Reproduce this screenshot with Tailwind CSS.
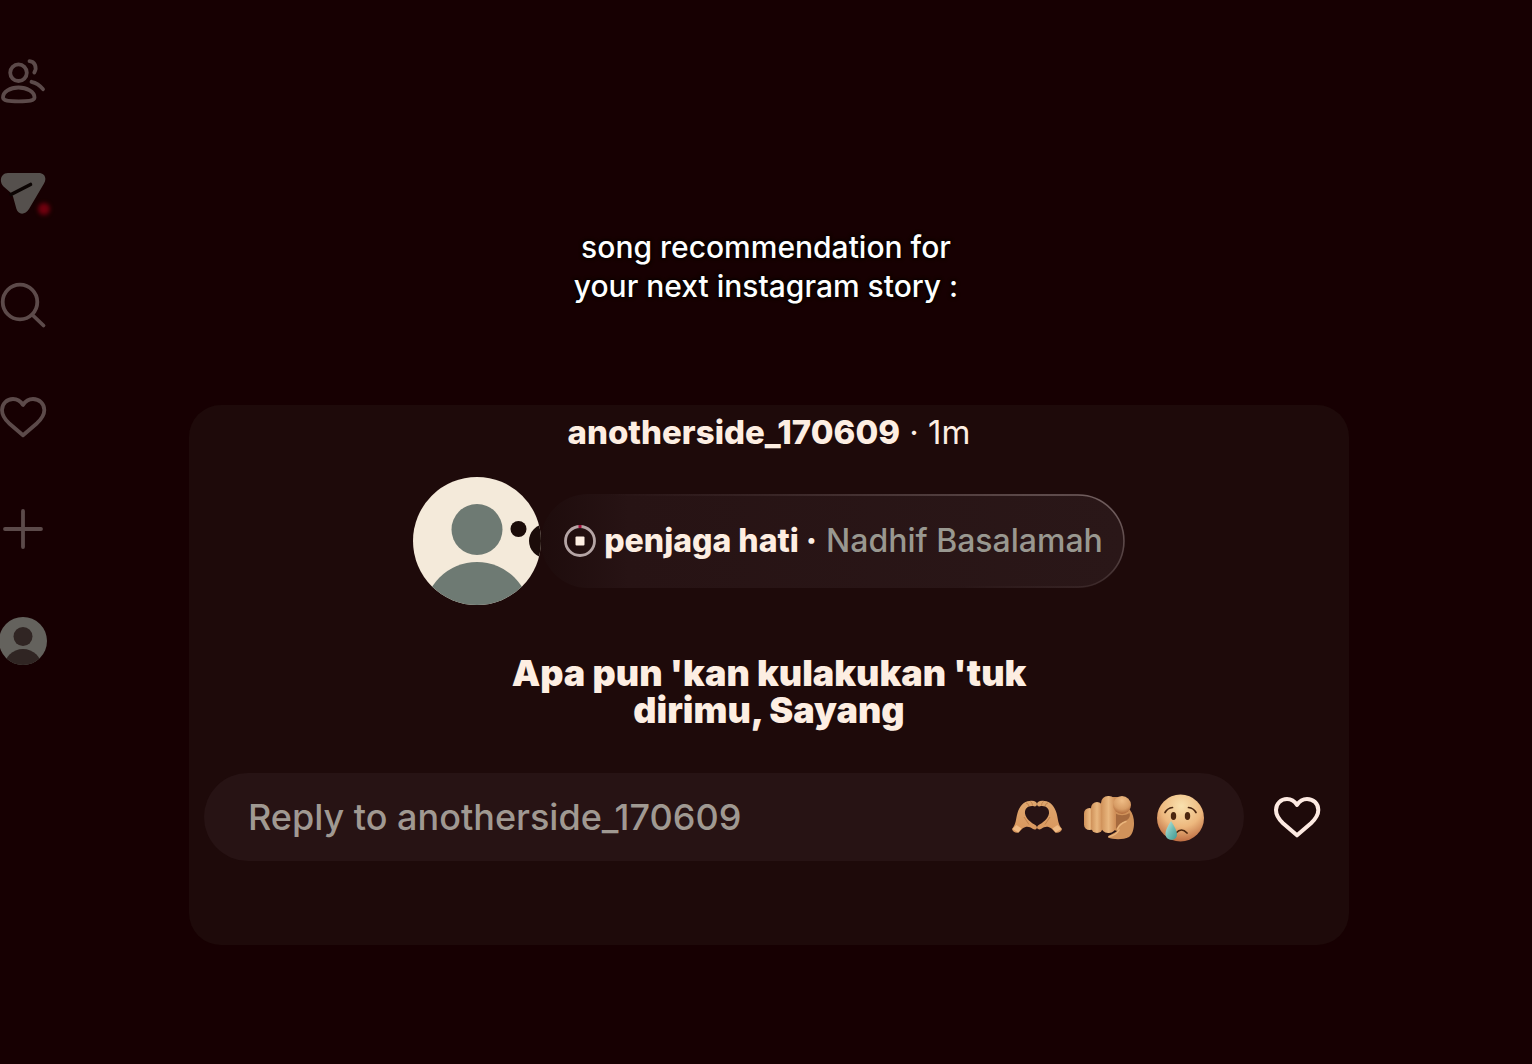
<!DOCTYPE html>
<html lang="en">
<head>
<meta charset="utf-8">
<meta name="viewport" content="width=device-width, initial-scale=1">
<title>Song recommendation</title>
<script src="https://cdn.jsdelivr.net/npm/@tailwindcss/browser@4"></script>
</head>
<body class="flex min-h-screen bg-[#170002] font-[Inter,sans-serif] text-[#fdeee2]">
  <nav class="flex w-12 shrink-0 flex-col gap-16 pt-[57px] text-[#5c4a4a]" aria-label="Main">
    <a href="#friends" aria-label="Friends" class="block size-12">
      <svg class="size-12" viewBox="0 0 48 48" fill="none" stroke="currentColor" stroke-width="3.8" stroke-linecap="round">
        <circle cx="18.5" cy="15.7" r="8.3"/>
        <path d="M3 40.500C3 35 10 30.500 18.500 30.500S34.500 35 34.500 40.500C34.500 43.500 29 44.300 18.700 44.300S3 43.500 3 40.500Z"/>
        <path d="M29.500 4.200C34.500 4.500 37.500 10 34.300 15.500M31.500 24.800C36.500 25.800 40.500 29 43 32.200"/>
      </svg>
    </a>
    <a href="#messages" aria-label="Messages" class="relative block size-12">
      <svg class="size-12" viewBox="0 0 48 48">
        <path fill="#55504d" d="M8 4H38.500C45 4 47 9.500 44 14.500L29 40C25 46.500 18 46 16.300 39.500L13 27.500L11 24L3.500 17.500C-1.500 12.500 1 4 8 4Z"/>
        <path d="M11 25.500L30.500 15.500" stroke="#0b0403" stroke-width="3.600" stroke-linecap="round"/>
      </svg>
      <span class="absolute top-[34px] left-[38px] size-3 rounded-full bg-[#70000e] blur-[2px]"></span>
    </a>
    <a href="#search" aria-label="Search" class="block size-12">
      <svg class="size-12" viewBox="0 0 48 48" fill="none" stroke="currentColor" stroke-width="3.8" stroke-linecap="round"><circle cx="20" cy="21" r="17.3"/><path d="M32.500 34L43.500 44.500"/></svg>
    </a>
    <a href="#activity" aria-label="Activity" class="block size-12">
      <svg class="size-12" viewBox="0 0 48 48" fill="none" stroke="currentColor" stroke-width="3.8" stroke-linejoin="round"><path d="M23 12C20.500 8 17 6 13 6C7 6 2 10.500 2 17C2 22.500 4.500 26 9 30.200L23 42.300L37 30.200C41.500 26 44.300 22.500 44.300 17C44.300 10.500 39.300 6 33 6C29 6 25.500 8 23 12Z"/></svg>
    </a>
    <a href="#create" aria-label="Create" class="block size-12">
      <svg class="size-12" viewBox="0 0 48 48" fill="none" stroke="currentColor" stroke-width="3.8" stroke-linecap="round"><path d="M23 6V42M5 24H41"/></svg>
    </a>
    <a href="#profile" aria-label="Profile" class="block size-12">
      <svg class="size-12" viewBox="0 0 48 48">
        <clipPath id="nav-avatar"><circle cx="23" cy="24" r="24"/></clipPath>
        <g clip-path="url(#nav-avatar)"><path fill="#64625d" d="M-1 0H48V48H-1Z"/><g fill="#302523"><circle cx="23" cy="19.500" r="9.500"/><circle cx="23" cy="51" r="19"/></g></g>
      </svg>
    </a>
  </nav>

  <main class="min-w-0 flex-1 pt-[228px] pr-[183px] pl-[141px]">
    <h1 class="pr-1.5 text-center text-[30px] leading-[39px] font-medium text-white [text-shadow:0_0_3px_#000,0_0_4px_#000]">song recommendation for<br>your next instagram story :</h1>

    <section class="mt-[99px] min-h-[540px] rounded-[32px] bg-[#1e0a0a] pt-2" aria-label="Note">
      <p class="text-center text-[33px] leading-[38px]"><strong class="font-extrabold">anotherside_170609</strong> · 1m</p>

      <div class="mt-[26px] flex items-center justify-center">
        <svg class="size-32 shrink-0" viewBox="0 0 128 128" role="img" aria-label="Profile picture">
          <clipPath id="avatar"><circle cx="64" cy="64" r="64"/></clipPath>
          <g clip-path="url(#avatar)">
            <path fill="#f4eada" d="M0 0H128V128H0Z"/>
            <g fill="#6e7a73"><circle cx="64" cy="52.500" r="25.500"/><circle cx="64" cy="138" r="53"/></g>
            <g fill="#1b0c09"><circle cx="105.500" cy="52" r="8"/><circle cx="133" cy="64" r="17"/></g>
          </g>
        </svg>
        <div class="relative flex h-[94px] items-center rounded-full bg-linear-to-r from-[#1e0c0c] via-[#271314] via-15% to-[#2a1718] pr-[22px] pl-[23px] text-[32px] leading-10 whitespace-nowrap">
          <svg class="pointer-events-none absolute inset-0 size-full" aria-hidden="true">
            <defs><linearGradient id="rim" x1="0" y1=".6" x2="1" y2="0"><stop offset=".35" stop-color="#6f5c5c" stop-opacity="0"/><stop offset=".55" stop-color="#6f5c5c" stop-opacity=".3"/><stop offset=".9" stop-color="#6f5c5c"/></linearGradient></defs>
            <rect x="1" y="1" width="99.700%" height="92" rx="46" fill="none" stroke="url(#rim)" stroke-width="1.500"/>
          </svg>
          <svg class="mr-2 size-8 shrink-0" viewBox="0 0 32 32" aria-hidden="true">
            <circle cx="16" cy="16" r="14.500" fill="none" stroke="#b5a5a5" stroke-width="2.800"/>
            <path d="M14.500 1.500H17.500" stroke="#a5103c" stroke-width="3"/>
            <rect x="11.500" y="11.500" width="9" height="9" rx="1" fill="#fdeee2"/>
          </svg>
          <p><strong class="font-extrabold">penjaga hati ·</strong> <span class="font-medium text-[#999890]">Nadhif Basalamah</span></p>
        </div>
      </div>

      <p class="mt-[50px] text-center text-[36px] leading-[37px] font-black">Apa pun 'kan kulakukan 'tuk<br>dirimu, Sayang</p>

      <form class="mt-11 flex items-center pr-7 pl-[15px]">
        <div class="flex h-[88px] min-w-0 flex-1 items-center rounded-full bg-[#271314] pr-[37px] pl-11">
          <input type="text" aria-label="Reply to anotherside_170609" placeholder="Reply to anotherside_170609" class="min-w-0 flex-1 bg-transparent text-[36px] leading-[44px] font-medium outline-none placeholder:text-[#a09992]">
          <div class="flex gap-5">
            <button type="button" aria-label="Heart hands" class="size-[52px]">
              <svg class="size-[52px]" viewBox="0 0 52 52">
                <defs><linearGradient id="hand" x1="0" y1="0" x2="0" y2="1"><stop stop-color="#dfa76e"/><stop offset="1" stop-color="#d8965d"/></linearGradient></defs>
                <g id="heart-hand" fill="url(#hand)">
                  <path d="M1 38C5 34 5 27 6.500 22C8.500 15 13 10 18.500 10C22.500 9 26 10.500 26 13C25.800 15.500 24 16 22 15C16.500 14.500 13.500 18 14 22.500C15 28 20 31.500 25 34.500C27.500 37 24.500 39.500 22 38C18 35 15 35 11.500 37.500L7.500 41.500C5 42.500 1.500 40.500 1 38Z"/>
                  <path d="M1.500 38L7.500 41.500L10.500 37.500L5.500 34Z" fill="#f0bb85"/>
                  <path d="M15 12Q17 12 18 15M19.500 10.500Q21.500 12 21.500 14.500M13 26L18 33.500" fill="none" stroke="#b87945" stroke-width=".8"/>
                </g>
                <use href="#heart-hand" transform="matrix(-1 0 0 1 52 0)"/>
              </svg>
            </button>
            <button type="button" aria-label="Pointing finger" class="size-[52px]">
              <svg class="size-[52px]" viewBox="0 0 52 52">
                <defs>
                  <linearGradient id="finger" x1="0" y1="0" x2="1" y2="0"><stop stop-color="#cf9159"/><stop offset=".5" stop-color="#e9b77f"/><stop offset="1" stop-color="#cd8b54"/></linearGradient>
                  <radialGradient id="tip" cx=".5" cy=".25" r=".75"><stop stop-color="#efbd86"/><stop offset=".65" stop-color="#d79c65"/><stop offset="1" stop-color="#b06a3b"/></radialGradient>
                </defs>
                <path fill="#d0925a" d="M28 6H38L47 19C53 26 52 42 46 46C40 49 30 48.500 25 46.500C26 43.500 31 43 34 40L28 38Z"/>
                <rect x="1" y="17" width="11" height="22" rx="5.500" fill="url(#finger)"/>
                <rect x="8" y="11" width="12" height="31" rx="6" fill="url(#finger)"/>
                <path d="M32 22C36 25 42 25 46.500 22C48 26 45 29.500 40 31C36 32.500 35 36 33 38Z" fill="#a66a3e"/>
                <path d="M34.500 38C36 34 39 32 43 30.500" fill="none" stroke="#eab57c" stroke-width="1.500" stroke-linecap="round"/>
                <path d="M26 45.500C31 44.500 34 42.500 36 39" fill="none" stroke="#eab57c" stroke-width="1.500" stroke-linecap="round"/>
                <rect x="18" y="5" width="15" height="37" rx="7" fill="url(#finger)"/>
                <circle cx="39" cy="14" r="9" fill="url(#tip)"/>
              </svg>
            </button>
            <button type="button" aria-label="Crying face" class="size-[52px]">
              <svg class="size-[52px]" viewBox="0 0 52 52">
                <defs>
                  <radialGradient id="face" cx=".52" cy=".25" r=".8"><stop stop-color="#f9e1af"/><stop offset=".55" stop-color="#edb87e"/><stop offset="1" stop-color="#b8633a"/></radialGradient>
                  <linearGradient id="tear" x1="0" y1="0" x2="1" y2="1"><stop stop-color="#c3ebe2"/><stop offset=".5" stop-color="#75beb5"/><stop offset="1" stop-color="#429993"/></linearGradient>
                </defs>
                <circle cx="25.500" cy="27" r="23.500" fill="url(#face)"/>
                <g fill="#4b260f"><ellipse cx="18.500" cy="25" rx="2.700" ry="4"/><ellipse cx="32.500" cy="25" rx="2.700" ry="4"/></g>
                <path d="M10 21.500Q12.500 17 17.500 16.500M33.500 16.500Q38.500 17 41 21.500M21 42Q26.500 36 32 42" fill="none" stroke="#4b260f" stroke-width="1.700" stroke-linecap="round"/>
                <path fill="url(#tear)" d="M16 30Q10 39 10.500 43.500C11 50.500 22 50.500 22 43.500Q22 39 16 30Z"/>
              </svg>
            </button>
          </div>
        </div>
        <button type="button" aria-label="Like" class="ml-[29px] size-12">
          <svg class="size-12" viewBox="0 0 48 48" fill="none" stroke="#fdeae2" stroke-width="4" stroke-linejoin="round"><path d="M24 12C21.500 8 18 6 14 6C8 6 3 10.500 3 17C3 22.500 5.500 26 10 30.200L24 42.300L38 30.200C42.500 26 45.300 22.500 45.300 17C45.300 10.500 40.300 6 34 6C30 6 26.500 8 24 12Z"/></svg>
        </button>
      </form>
    </section>
  </main>
</body>
</html>
